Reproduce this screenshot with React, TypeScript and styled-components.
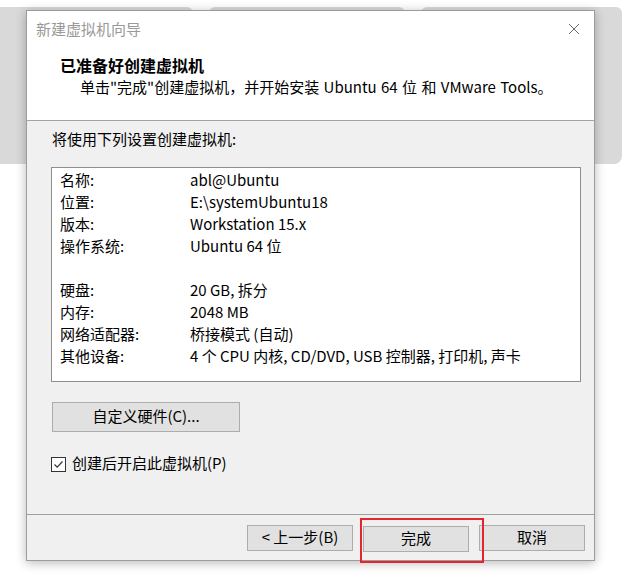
import React from 'react'
import styled, { createGlobalStyle } from 'styled-components'

const GlobalStyle = createGlobalStyle`
    html, body {
        margin: 0;
        padding: 0;
        background: #ffffff;
    }
    body {
        font-family: 'Noto Sans CJK SC', 'Noto Sans', sans-serif;
        color: #000;
    }
`

const Desktop = styled.div`
    position: relative;
    width: 629px;
    height: 577px;
    overflow: hidden;
    background: #ffffff;
`

// window that sits behind the wizard
const BackWindow = styled.div`
    position: absolute;
    left: -10px;
    top: 7px;
    width: 632px;
    height: 157px;
    display: flex;
    flex-direction: column;
`

const BackTabs = styled.div`
    display: flex;
    gap: 16px;
    height: 6px;
`

const BackTab = styled.div<{ $w: number }>`
    width: ${(p) => p.$w}px;
    background: #d9d9d9;
    border-radius: 8px 8px 0 0;
`

const BackBody = styled.div`
    flex: 1;
    background: #d9d9d9;
    border-radius: 0 0 8px 8px;
`

const Dialog = styled.div`
    position: absolute;
    left: 26px;
    top: 10px;
    width: 567px;
    height: 549px;
    display: flex;
    flex-direction: column;
    border: 1px solid #9c9c9c;
    background: #f0f0f0;
    box-shadow: 0 2px 10px rgba(0, 0, 0, 0.28);
`

const TitleBar = styled.div`
    height: 38px;
    display: flex;
    align-items: center;
    justify-content: space-between;
    padding: 0 14px 3px 9px;
    box-sizing: border-box;
    background: #fff;
`

const TitleText = styled.span`
    font-size: 15px;
    color: #999;
    line-height: 20px;
`

const CloseIcon = styled.svg`
    width: 12px;
    height: 12px;
`

const Header = styled.div`
    background: #fff;
    padding: 5px 0 22px 33px;
    border-bottom: 1px solid #a3a3a3;
`

const Heading = styled.div`
    font-size: 16px;
    font-weight: 700;
    line-height: 22px;
`

const SubText = styled.div`
    font-size: 15px;
    line-height: 22px;
    padding-left: 20px;
    word-spacing: 1px;
`

const Body = styled.div`
    flex: 1;
    padding: 7px 0 0 24px;
    display: flex;
    flex-direction: column;
    align-items: flex-start;
`

const Intro = styled.div`
    font-size: 15px;
    line-height: 22px;
    padding-left: 1px;
`

const SummaryBox = styled.div`
    margin-top: 17px;
    width: 530px;
    height: 215px;
    box-sizing: border-box;
    background: #fff;
    border: 1px solid #8e8e8e;
    padding: 1px 0 0 8px;
`

const Row = styled.div`
    display: grid;
    grid-template-columns: 130px 1fr;
    height: 22px;
    line-height: 22px;
    font-size: 15px;
`

const Button = styled.button<{ $w: number }>`
    width: ${(p) => p.$w}px;
    height: 26px;
    padding: 0 0 2px;
    background: #e1e1e1;
    border: 1px solid #adadad;
    font-family: 'Noto Sans CJK SC', 'Noto Sans', sans-serif;
    font-size: 15px;
    line-height: 22px;
    color: #000;
`

const HardwareButton = styled(Button)`
    margin-top: 20px;
    margin-left: 1px;
    height: 30px;
`

const CheckRow = styled.label`
    margin-top: 20px;
    display: flex;
    align-items: center;
    gap: 6px;
    font-size: 15px;
    line-height: 22px;
`

const CheckBox = styled.span`
    width: 13px;
    height: 13px;
    margin-top: 2px;
    border: 1px solid #333;
    background: #fff;
    display: flex;
    align-items: center;
    justify-content: center;
`

const Footer = styled.div`
    height: 46px;
    border-top: 1px solid #a0a0a0;
    display: flex;
    justify-content: flex-end;
    align-items: flex-start;
    gap: 10px;
    padding: 10px 9px 0 0;
    box-sizing: border-box;
`

const Highlight = styled.div`
    position: relative;
`

const RedFrame = styled.div`
    position: absolute;
    left: -3px;
    right: -15px;
    top: -7px;
    bottom: -11px;
    border: 2px solid #e3262e;
    pointer-events: none;
`

const settings: [string, string][] = [
    ['名称:', 'abl@Ubuntu'],
    ['位置:', 'E:\\systemUbuntu18'],
    ['版本:', 'Workstation 15.x'],
    ['操作系统:', 'Ubuntu 64 位'],
    ['', ''],
    ['硬盘:', '20 GB, 拆分'],
    ['内存:', '2048 MB'],
    ['网络适配器:', '桥接模式 (自动)'],
    ['其他设备:', '4 个 CPU 内核, CD/DVD, USB 控制器, 打印机, 声卡'],
]

export default function App() {
    return (
        <Desktop>
            <GlobalStyle />
            <BackWindow>
                <BackTabs>
                    <BackTab $w={203} />
                    <BackTab $w={196} />
                    <BackTab $w={201} />
                </BackTabs>
                <BackBody />
            </BackWindow>
            <Dialog>
                <TitleBar>
                    <TitleText>新建虚拟机向导</TitleText>
                    <CloseIcon viewBox="0 0 12 12">
                        <path d="M1 1 L11 11 M11 1 L1 11" stroke="#6b6b6b" strokeWidth="1" fill="none" />
                    </CloseIcon>
                </TitleBar>
                <Header>
                    <Heading>已准备好创建虚拟机</Heading>
                    <SubText>单击"完成"创建虚拟机，并开始安装 Ubuntu 64 位 和 VMware Tools。</SubText>
                </Header>
                <Body>
                    <Intro>将使用下列设置创建虚拟机:</Intro>
                    <SummaryBox>
                        {settings.map(([k, v], i) => (
                            <Row key={i}>
                                <span>{k}</span>
                                <span>{v}</span>
                            </Row>
                        ))}
                    </SummaryBox>
                    <HardwareButton $w={188}>自定义硬件(C)...</HardwareButton>
                    <CheckRow>
                        <CheckBox>
                            <svg width="11" height="11" viewBox="0 0 11 11">
                                <path d="M1.5 5.5 L4.2 8.2 L9.5 2.5" stroke="#333" strokeWidth="1.2" fill="none" />
                            </svg>
                        </CheckBox>
                        创建后开启此虚拟机(P)
                    </CheckRow>
                </Body>
                <Footer>
                    <Button $w={106}>&lt; 上一步(B)</Button>
                    <Highlight>
                        <Button $w={106}>完成</Button>
                        <RedFrame />
                    </Highlight>
                    <Button $w={106}>取消</Button>
                </Footer>
            </Dialog>
        </Desktop>
    )
}
